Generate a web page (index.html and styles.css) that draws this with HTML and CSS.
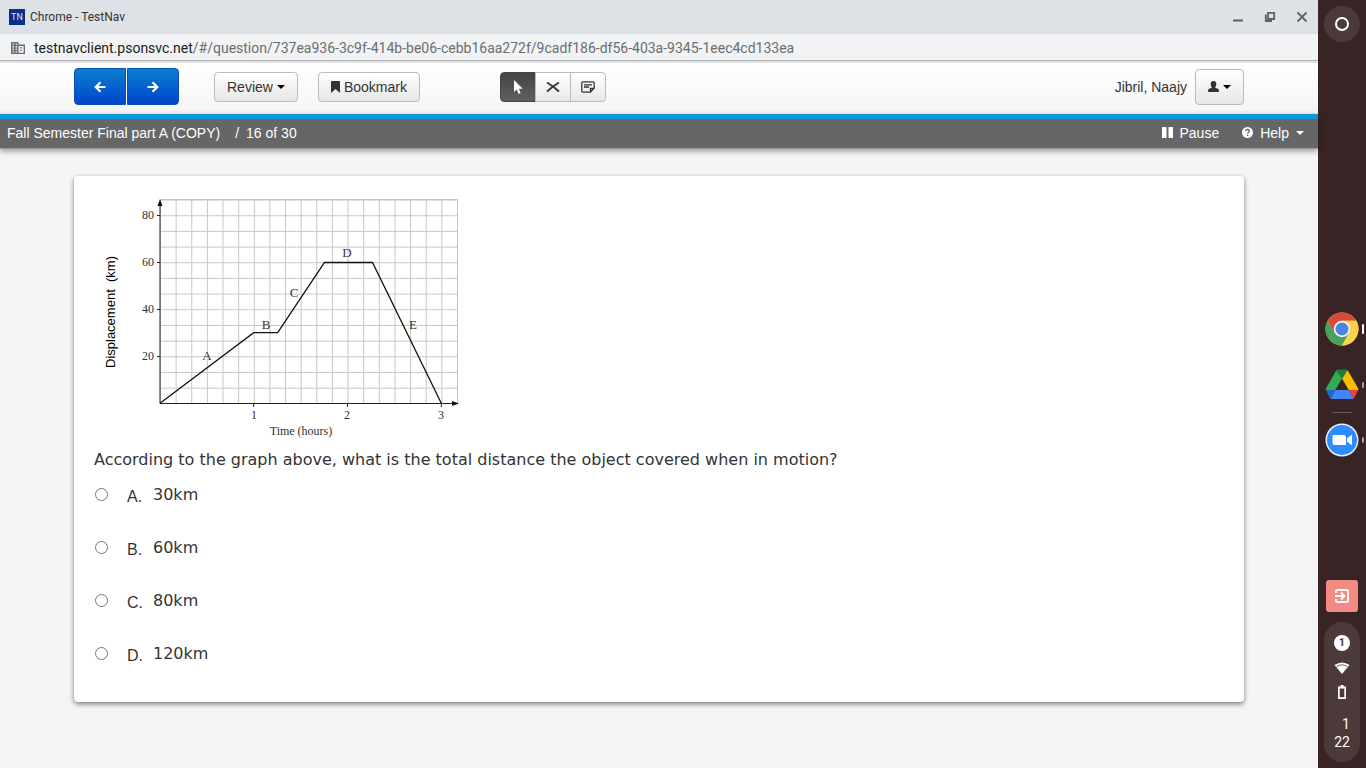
FILE: index.html
```html
<!DOCTYPE html>
<html lang="en">
<head>
  <meta charset="UTF-8" />
  <meta name="viewport" content="width=device-width, initial-scale=1.0"/>
  <title>Chrome - TestNav</title>
  <link rel="stylesheet" href="styles.css">
</head>
<body>
  <div class="window">
    <header class="titlebar">
      <span class="favicon">TN</span>
      <span class="title">Chrome - TestNav</span>
      <div class="window-buttons">
        <button type="button" aria-label="Minimize">
          <svg width="12" height="12" viewBox="0 0 12 12"><path d="M1 9.5h10" stroke="#5f6368" stroke-width="2"/></svg>
        </button>
        <button type="button" aria-label="Restore">
          <svg width="12" height="12" viewBox="0 0 12 12"><path d="M4 1.8h6.2V8H4zM1.8 3.5V10H8" fill="none" stroke="#5f6368" stroke-width="1.8"/></svg>
        </button>
        <button type="button" aria-label="Close">
          <svg width="12" height="12" viewBox="0 0 12 12"><path d="M1.5 1.5l9 9M10.5 1.5l-9 9" stroke="#5f6368" stroke-width="1.8"/></svg>
        </button>
      </div>
    </header>

    <div class="urlbar">
      <svg width="14" height="12" viewBox="0 0 14 12"><path d="M0 0h7.5v2.5H14V12H0z" fill="#6a6e72"/><path d="M1.5 1.5h1.6v1.3H1.5zM4.6 1.5h1.6v1.3H4.6zM1.5 4.1h1.6v1.3H1.5zM4.6 4.1h1.6v1.3H4.6zM1.5 6.7h1.6V8H1.5zM4.6 6.7h1.6V8H4.6zM1.5 9.3h1.6v1.3H1.5zM4.6 9.3h1.6v1.3H4.6zM7.6 3.9h5v6.8h-5z" fill="#f1f3f4"/><path d="M9.2 5.1h1.6v1.3H9.2zM9.2 7.8h1.6v1.3H9.2z" fill="#6a6e72"/></svg>
      <span class="url"><b>testnavclient.psonsvc.net</b>/#/question/737ea936-3c9f-414b-be06-cebb16aa272f/9cadf186-df56-403a-9345-1eec4cd133ea</span>
    </div>

    <nav class="toolbar">
      <div class="pager">
        <button type="button" aria-label="Previous">
          <svg width="12" height="12" viewBox="0 0 12 12"><path d="M6.5 1.2L1.7 6l4.8 4.8M2 6h9.5" fill="none" stroke="#fff" stroke-width="2.2"/></svg>
        </button>
        <button type="button" aria-label="Next">
          <svg width="12" height="12" viewBox="0 0 12 12"><path d="M5.5 1.2L10.3 6l-4.8 4.8M10 6H.5" fill="none" stroke="#fff" stroke-width="2.2"/></svg>
        </button>
      </div>
      <button type="button" class="btn review">Review <span class="caret"></span></button>
      <button type="button" class="btn bookmark">
        <svg width="9" height="12" viewBox="0 0 9 12"><path d="M0 1q0-1 1-1h7q1 0 1 1v11L4.5 8 0 12z" fill="#333"/></svg>
        Bookmark
      </button>
      <div class="tools">
        <button type="button" class="active" aria-label="Pointer">
          <svg width="12" height="16" viewBox="0 0 12 16"><path d="M2 1v12l2.8-2.5L6.7 15l2-.9L6.8 9.7h3.9z" fill="#fff"/></svg>
        </button>
        <button type="button" aria-label="Answer eliminator">
          <svg width="14" height="12" viewBox="0 0 14 12"><path d="M1 1.5Q7 5 13 10.5M13 1.5Q7 5 1 10.5" fill="none" stroke="#333" stroke-width="1.8"/></svg>
        </button>
        <button type="button" aria-label="Notepad">
          <svg width="14" height="12" viewBox="0 0 14 12"><path d="M2 .8h10q1.2 0 1.2 1.2v5L9.5 11.2H2Q.8 11.2.8 10V2Q.8.8 2 .8zM9.500 11V7.500h3.500M3 3.800h8M3 6h5" fill="none" stroke="#333" stroke-width="1.300"/></svg>
        </button>
      </div>
      <div class="user">
        <span>Jibril, Naajy</span>
        <button type="button" class="btn user-btn" aria-label="Account">
          <svg width="11" height="12" viewBox="0 0 11 12"><path d="M5.5 0C7.300 0 8.300 1.200 8.300 3c0 1.500-.5 2.500-1.200 3.200C7.500 7.300 11 7.200 11 9.500V10q0 1-1 1H1q-1 0-1-1v-.5C0 7.200 3.500 7.300 3.900 6.200 3.200 5.500 2.700 4.500 2.700 3 2.700 1.200 3.700 0 5.500 0z" fill="#333"/></svg>
          <span class="caret"></span>
        </button>
      </div>
    </nav>

    <div class="statusbar">
      <span>Fall Semester Final part A (COPY)</span>
      <span class="slash">/</span>
      <span>16 of 30</span>
      <button type="button" class="pause">
        <svg width="11" height="11" viewBox="0 0 11 11"><path d="M0 0h4.5v11H0zM6.500 0H11v11H6.500z" fill="#fff"/></svg>
        Pause
      </button>
      <button type="button" class="help">
        <svg width="11" height="11" viewBox="0 0 11 11"><circle cx="5.500" cy="5.500" r="5.500" fill="#fff"/><path d="M3.700 4.200q0-1.700 1.800-1.700t1.800 1.500c0 1.200-1.700 1.200-1.700 2.600M5.600 7.600v1.300" fill="none" stroke="#666" stroke-width="1.300"/></svg>
        Help
        <span class="caret"></span>
      </button>
    </div>

    <main class="page">
      <form class="card">
        <svg class="graph" width="380" height="250" viewBox="94 192 380 250" role="img" aria-label="Displacement against time">
          <defs>
            <pattern id="grid" x="160" y="403.3" width="15.63" height="15.67" patternUnits="userSpaceOnUse">
              <path d="M0 .5h15.63M.5 0v15.67" stroke="#c6c6c6" stroke-width="1"/>
            </pattern>
          </defs>
          <rect x="160" y="199.6" width="297.5" height="203.7" fill="url(#grid)"/>
          <path d="M160 199.5h297.5v204" fill="none" stroke="#c6c6c6"/>
          <path d="M160 403.5V203M160 403.5h294M157 215.5h3M157 262.5h3M157 309.5h3M157 356.5h3M253.7 403v4M347.5 403v4M441.3 403v4" fill="none" stroke="#222"/>
          <path d="M160 199l2.5 7h-5zM459 403.5l-7 2.5v-5z" fill="#111"/>
          <path d="M160 403.3L253.7 332.7h24L324.5 262.5h48L441.3 403.3" fill="none" stroke="#111" stroke-width="1.3"/>
          <g class="serif" text-anchor="end">
            <text x="154" y="219">80</text>
            <text x="154" y="266">60</text>
            <text x="154" y="313">40</text>
            <text x="154" y="360">20</text>
          </g>
          <g class="serif" text-anchor="middle">
            <text x="254" y="419">1</text>
            <text x="347" y="419">2</text>
            <text x="441" y="419">3</text>
            <text x="301" y="435">Time (hours)</text>
          </g>
          <g class="serif point" text-anchor="middle">
            <text x="207" y="360">A</text>
            <text x="266" y="329">B</text>
            <text x="294" y="297">C</text>
            <text x="347" y="257">D</text>
            <text x="413" y="329">E</text>
          </g>
          <text class="axis" transform="translate(115 368) rotate(-90)" xml:space="preserve">Displacement  (km)</text>
        </svg>

        <p class="question">According to the graph above, what is the total distance the object covered when in motion?</p>

        <div class="choices">
          <label class="choice"><input type="radio" name="answer" value="a"><span class="letter">A.</span><span class="answer">30km</span></label>
          <label class="choice"><input type="radio" name="answer" value="b"><span class="letter">B.</span><span class="answer">60km</span></label>
          <label class="choice"><input type="radio" name="answer" value="c"><span class="letter">C.</span><span class="answer">80km</span></label>
          <label class="choice"><input type="radio" name="answer" value="d"><span class="letter">D.</span><span class="answer">120km</span></label>
        </div>
      </form>
    </main>
  </div>

  <aside class="shelf">
    <button type="button" class="launcher" aria-label="Launcher"><span></span></button>

    <div class="apps">
      <button type="button" class="app current" aria-label="Chrome">
        <svg width="34" height="34" viewBox="0 0 34 34">
          <circle cx="17" cy="17" r="16.5" fill="#fbd24e"/>
          <path d="M2.7 8.8A16.5 16.5 0 0 1 31.3 8.8H17L9.9 21.1z" fill="#d9493a"/>
          <path d="M2.7 8.8A16.5 16.5 0 0 0 17 33.5L24.1 21.1H9.9z" fill="#4aa15c"/>
          <path d="M17 8.8h14.3A16.5 16.5 0 0 1 17 33.5L24.1 21.1z" fill="#fbd24e"/>
          <circle cx="17" cy="17" r="8.2" fill="#f4f4f4"/>
          <circle cx="17" cy="17" r="6.5" fill="#4a86e0"/>
        </svg>
      </button>
      <button type="button" class="app" aria-label="Drive">
        <svg width="34" height="34" viewBox="0 0 34 34">
          <path d="M11.5 2L.8 20.5q-.4.700 0 1.500h9.500L17 10.500z" fill="#34a853"/>
          <path d="M22.500 2l10.700 18.500q.4.700 0 1.500h-9.500L17 10.500z" fill="#fbbc04"/>
          <path d="M11.500 2q.7-.5 1.500-.5h8q.8 0 1.500.5L17 10.500z" fill="#188038"/>
          <path d="M10.300 22h13.400l4.800 8.500q-.7.500-1.500.5H7q-.8 0-1.500-.5z" fill="#4285f4"/>
          <path d="M.8 22h9.500l-4.800 8.500q-.6-.4-1-1z" fill="#1967d2"/>
          <path d="M23.700 22h9.500l-3.700 7.500q-.4.600-1 1z" fill="#ea4335"/>
        </svg>
      </button>
      <hr>
      <button type="button" class="app" aria-label="Zoom">
        <svg width="34" height="34" viewBox="0 0 34 34">
          <circle cx="17" cy="17" r="16.5" fill="#e8f1fb"/>
          <circle cx="17" cy="17" r="15" fill="#2d8cff"/>
          <path d="M7.5 12h11q2.500 0 2.500 2.500V22H10q-2.500 0-2.500-2.500zM22 15.300l5-3.500v10.400l-5-3.500z" fill="#fff"/>
        </svg>
      </button>
    </div>

    <div class="bottom">
      <button type="button" class="exit" aria-label="Sign out">
        <svg width="16" height="16" viewBox="0 0 16 16"><path d="M2 5V3q0-1 1-1h10q1 0 1 1v10q0 1-1 1H3q-1 0-1-1v-2M1 8h9M7 4.500L10.500 8 7 11.500" fill="none" stroke="#fff" stroke-width="1.800"/></svg>
      </button>
      <div class="tray">
        <span class="count">1</span>
        <svg width="16" height="12" viewBox="0 0 16 12"><path d="M.5 3Q8-2 15.500 3L8 12z" fill="#fff"/><path d="M2.500 4.600q5.500-3.600 11 0" fill="none" stroke="#4c3a3a" stroke-width=".8"/></svg>
        <svg width="10" height="14" viewBox="0 0 10 14"><path d="M3.500 0h3v1.500H9V14H1V1.500h2.500z" fill="#fff"/><path d="M2.700 3.500h4.600v8.700H2.700z" fill="#4c3a3a"/></svg>
        <time class="clock">1<br>22</time>
      </div>
    </div>
  </aside>
</body>
</html>
```

FILE: styles.css
```css
:root {
  --text: #333;
  --bar: #666;
  --blue: #0d99d6;
  --shelf: #382424;
  --pill: #4c3a3a;
  --font-ui: Roboto, sans-serif;
  --font-body: 'Liberation Sans', Arial, sans-serif;
}

* {
  box-sizing: border-box;
}

body {
  display: flex;
  min-height: 100vh;
  margin: 0;
  font-family: var(--font-body);
  font-size: 14px;
  color: var(--text);
}

button {
  display: flex;
  align-items: center;
  justify-content: center;
  padding: 0;
  border: none;
  background: none;
  font: inherit;
  color: inherit;
}

.window {
  flex: 1;
  display: flex;
  flex-direction: column;
}

/* Window frame */
.titlebar {
  display: flex;
  align-items: center;
  gap: 5px;
  height: 34px;
  padding: 0 10px 0 9px;
  background: #dee1e6;
  font-family: var(--font-ui);
  font-size: 12px;
}

.favicon {
  width: 16px;
  background: #0a2f86;
  color: #dfe6f5;
  font-size: 9px;
  line-height: 16px;
  text-align: center;
}

.window-buttons {
  display: flex;
  gap: 20px;
  margin-left: auto;
}

.urlbar {
  display: flex;
  align-items: center;
  gap: 9px;
  height: 27px;
  padding: 2px 11px 0;
  background: #f1f3f4;
  border-bottom: 1px solid #aeb0b3;
  font-family: var(--font-ui);
  color: #6a6e72;
}

.urlbar b {
  font-weight: 400;
  color: #202124;
}

/* Toolbar */
.toolbar {
  display: flex;
  align-items: center;
  height: 53px;
  padding: 0 74px 4px;
  background: linear-gradient(#fff, #f5f5f5);
  border-top: 2px solid #e4e4e4;
}

.pager {
  display: flex;
  gap: 1px;
  margin-right: 35px;
}

.pager button {
  width: 52px;
  height: 37px;
  background: linear-gradient(#0a7fd0, #0344cc);
  border: 1px solid #0850b4;
}

.pager button:first-child,
.tools button:first-child {
  border-radius: 4px 0 0 4px;
}

.pager button:last-child,
.tools button:last-child {
  border-radius: 0 4px 4px 0;
}

.btn {
  gap: 4px;
  height: 30px;
  border: 1px solid #bbb;
  border-radius: 4px;
  background: linear-gradient(#fff, #e6e6e6);
}

.caret {
  border: 4px solid transparent;
  border-top-color: currentColor;
  border-bottom: 0;
}

.btn .caret {
  border-top-color: #000;
}

.review,
.bookmark {
  padding: 0 12px;
  margin-right: 20px;
}

.tools {
  display: flex;
  margin-left: 60px;
}

.tools button {
  width: 36px;
  height: 30px;
  margin-right: -1px;
  border: 1px solid #bbb;
  background: linear-gradient(#fff, #e8e8e8);
}

.tools .active {
  border-color: #444;
  background: linear-gradient(#444, #606060);
}

.user {
  display: flex;
  align-items: center;
  gap: 8px;
  margin-left: auto;
}

.user-btn {
  width: 49px;
  height: 36px;
}

/* Test name and progress */
.statusbar {
  z-index: 1;
  display: flex;
  align-items: center;
  height: 35px;
  padding: 0 14px 2px 7px;
  background: var(--bar);
  border-top: 5px solid var(--blue);
  border-bottom: 1px solid #999;
  box-shadow: 0 2px 6px rgba(0, 0, 0, 0.4);
  color: #fff;
}

.slash {
  margin: 0 7px 0 15px;
}

.pause,
.help {
  gap: 7px;
}

.pause {
  margin-left: auto;
  margin-right: 23px;
}

/* Question */
.page {
  flex: 1;
  padding: 27px 74px;
  background-color: #f7f7f7;
  background-image: radial-gradient(#f2f2f2 1px, transparent 1px), radial-gradient(#f2f2f2 1px, transparent 1px);
  background-position: 0 0, 2px 2px;
  background-size: 4px 4px;
}

.card {
  padding: 16px 20px 4px;
  border-radius: 4px;
  background: #fff;
  box-shadow: 0 2px 5px rgba(0, 0, 0, 0.5);
}

.graph {
  display: block;
}

.serif {
  font-family: 'Liberation Serif', serif;
  font-size: 12px;
  fill: var(--text);
}

.point {
  font-size: 13px;
}

.axis {
  font-family: var(--font-body);
  font-size: 13px;
  fill: #000;
}

.question {
  margin: 8px 0 16px;
  font-family: 'DejaVu Sans', sans-serif;
  font-size: 16px;
  line-height: 20px;
}

.choice {
  display: flex;
  align-items: flex-start;
  height: 53px;
  font-size: 16px;
  line-height: 18px;
}

.choice input {
  width: 13px;
  height: 13px;
  margin: 2px 19px 0 1px;
}

.letter {
  width: 26px;
  padding-top: 2px;
}

.answer {
  font-family: 'DejaVu Sans', sans-serif;
}

/* Shelf */
.shelf {
  display: grid;
  grid-template-rows: 1fr auto 1fr;
  justify-items: center;
  width: 48px;
  padding: 6px 0;
  background: var(--shelf);
  font-family: var(--font-ui);
  color: #fff;
}

.launcher {
  width: 36px;
  height: 36px;
  border-radius: 50%;
  background: var(--pill);
}

.launcher span {
  width: 14px;
  height: 14px;
  border: 2px solid #fff;
  border-radius: 50%;
}

.apps {
  display: flex;
  flex-direction: column;
  align-items: center;
  gap: 22px;
  width: 100%;
}

.apps hr {
  width: 20px;
  height: 1px;
  margin: -12px 0;
  border: none;
  background: #6b5a5a;
}

.app {
  position: relative;
  width: 100%;
}

.app::after {
  content: '';
  position: absolute;
  right: 2px;
  width: 2px;
  height: 6px;
  border-radius: 1px;
  background: #a39a9a;
}

.current::after {
  height: 10px;
  background: #fff;
}

.bottom {
  display: flex;
  flex-direction: column;
  align-items: center;
  gap: 10px;
  align-self: end;
}

.exit {
  width: 32px;
  height: 32px;
  border-radius: 3px;
  background: #f28b82;
}

.tray {
  display: flex;
  flex-direction: column;
  align-items: center;
  gap: 11px;
  width: 36px;
  padding: 13px 0 11px;
  border-radius: 18px;
  background: var(--pill);
}

.count {
  width: 16px;
  border-radius: 50%;
  background: #fff;
  color: var(--pill);
  font-size: 11px;
  font-weight: 700;
  line-height: 16px;
  text-align: center;
}

.clock {
  margin-top: 5px;
  line-height: 18px;
  text-align: right;
}
```
